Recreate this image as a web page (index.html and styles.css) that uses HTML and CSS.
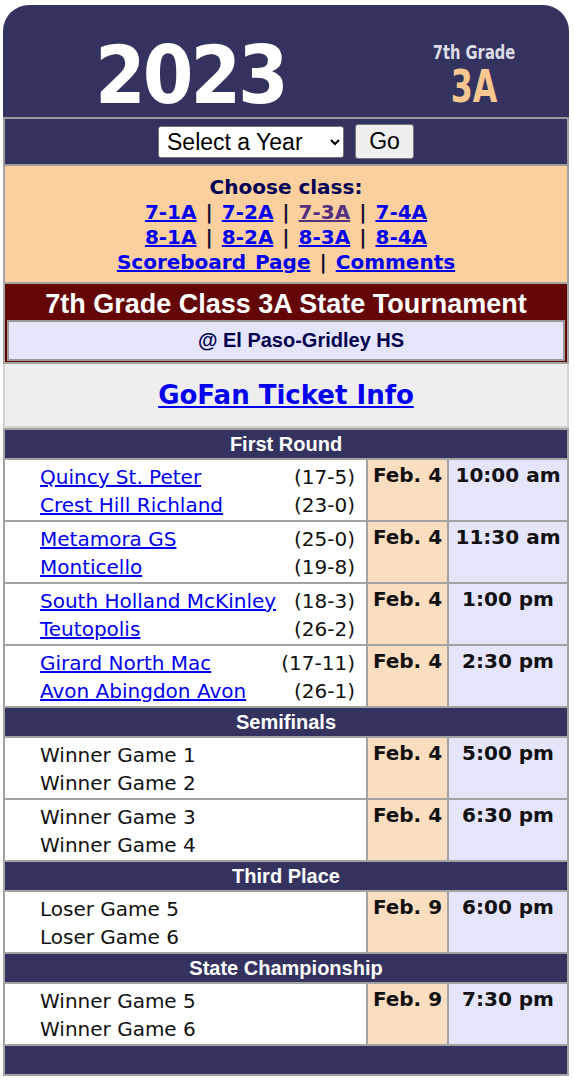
FILE: index.html
```html
<!DOCTYPE html>
<html lang="en">
<head>
<meta charset="utf-8">
<title>2023 7th Grade Class 3A State Tournament</title>
<link rel="stylesheet" href="styles.css">
</head>
<body>
<div class="page">
  <header class="banner">
    <div class="year">2023</div>
    <div class="grade">
      <div class="grade-label">7th Grade</div>
      <div class="grade-class">3A</div>
    </div>
  </header>

  <form class="yearbar">
    <select class="year-select">
      <option>Select a Year</option>
    </select>
    <button type="button" class="go">Go</button>
  </form>

  <nav class="classes">
    <div class="choose">Choose class:</div>
    <div class="links"><a href="#">7-1A</a> | <a href="#">7-2A</a> | <a href="#" class="visited">7-3A</a> | <a href="#">7-4A</a></div>
    <div class="links"><a href="#">8-1A</a> | <a href="#">8-2A</a> | <a href="#">8-3A</a> | <a href="#">8-4A</a></div>
    <div class="links"><a href="#">Scoreboard&nbsp;Page</a> | <a href="#">Comments</a></div>
  </nav>

  <section class="title">
    <h1>7th Grade Class 3A State Tournament</h1>
    <div class="site">@ El Paso-Gridley HS</div>
  </section>

  <div class="gofan"><a href="#">GoFan Ticket Info</a></div>

  <table class="bracket">
    <colgroup>
      <col class="c-teams">
      <col class="c-date">
      <col class="c-time">
    </colgroup>
    <tr class="round"><th colspan="3">First Round</th></tr>
    <tr class="game">
      <td class="teams"><div class="pair">
        <a href="#">Quincy St. Peter</a><span class="rec">(17-5)</span>
        <a href="#">Crest Hill Richland</a><span class="rec">(23-0)</span>
      </div></td>
      <td class="date">Feb. 4</td>
      <td class="time">10:00 am</td>
    </tr>
    <tr class="game">
      <td class="teams"><div class="pair">
        <a href="#">Metamora GS</a><span class="rec">(25-0)</span>
        <a href="#">Monticello</a><span class="rec">(19-8)</span>
      </div></td>
      <td class="date">Feb. 4</td>
      <td class="time">11:30 am</td>
    </tr>
    <tr class="game">
      <td class="teams"><div class="pair">
        <a href="#">South Holland McKinley</a><span class="rec">(18-3)</span>
        <a href="#">Teutopolis</a><span class="rec">(26-2)</span>
      </div></td>
      <td class="date">Feb. 4</td>
      <td class="time">1:00 pm</td>
    </tr>
    <tr class="game">
      <td class="teams"><div class="pair">
        <a href="#">Girard North Mac</a><span class="rec">(17-11)</span>
        <a href="#">Avon Abingdon Avon</a><span class="rec">(26-1)</span>
      </div></td>
      <td class="date">Feb. 4</td>
      <td class="time">2:30 pm</td>
    </tr>

    <tr class="round"><th colspan="3">Semifinals</th></tr>
    <tr class="game">
      <td class="teams"><div class="pair">
        <span>Winner Game 1</span><span></span>
        <span>Winner Game 2</span><span></span>
      </div></td>
      <td class="date">Feb. 4</td>
      <td class="time">5:00 pm</td>
    </tr>
    <tr class="game">
      <td class="teams"><div class="pair">
        <span>Winner Game 3</span><span></span>
        <span>Winner Game 4</span><span></span>
      </div></td>
      <td class="date">Feb. 4</td>
      <td class="time">6:30 pm</td>
    </tr>

    <tr class="round"><th colspan="3">Third Place</th></tr>
    <tr class="game">
      <td class="teams"><div class="pair">
        <span>Loser Game 5</span><span></span>
        <span>Loser Game 6</span><span></span>
      </div></td>
      <td class="date">Feb. 9</td>
      <td class="time">6:00 pm</td>
    </tr>

    <tr class="round"><th colspan="3">State Championship</th></tr>
    <tr class="game">
      <td class="teams"><div class="pair">
        <span>Winner Game 5</span><span></span>
        <span>Winner Game 6</span><span></span>
      </div></td>
      <td class="date">Feb. 9</td>
      <td class="time">7:30 pm</td>
    </tr>

    <tr class="round foot"><th colspan="3"></th></tr>
  </table>
</div>
</body>
</html>
```

FILE: styles.css
```css
* { box-sizing: border-box; }

html, body {
  margin: 0;
  padding: 0;
  background: #ffffff;
}

body {
  font-family: "DejaVu Sans", Verdana, sans-serif;
  color: #111111;
}

.page {
  width: 566px;
  margin: 5px 0 0 3px;
}

/* Banner */
.banner {
  height: 112px;
  background: #343360;
  border-radius: 26px 26px 0 0;
  display: flex;
  align-items: flex-start;
}

.year {
  font-family: "DejaVu Sans Condensed", "DejaVu Sans", sans-serif;
  font-stretch: condensed;
  font-weight: bold;
  font-size: 81px;
  line-height: 81px;
  letter-spacing: -3px;
  color: #ffffff;
  margin: 30px 0 0 92px;
}

.grade {
  margin: 36px 52px 0 auto;
  width: 86px;
  display: flex;
  flex-direction: column;
  align-items: center;
  font-family: "DejaVu Sans Condensed", "DejaVu Sans", sans-serif;
  font-stretch: condensed;
  font-weight: bold;
  white-space: nowrap;
}

.grade-label {
  font-size: 19px;
  line-height: 22px;
  color: #dcdce6;
  transform: scaleX(0.86);
}

.grade-class {
  margin-top: 4px;
  font-size: 44px;
  line-height: 40px;
  color: #f8c890;
  transform: scaleX(0.8);
}

/* Year bar */
.yearbar {
  margin: 0;
  height: 49px;
  background: #343360;
  border: 2px solid #9c9c9c;
  display: flex;
  align-items: center;
  justify-content: center;
  gap: 11px;
}

.year-select {
  width: 186px;
  height: 32px;
  font-family: "Liberation Sans", Arial, sans-serif;
  font-size: 23px;
  color: #000;
  background: #ffffff;
  border: 1px solid #767676;
  border-radius: 3px;
  padding: 0 4px;
}

.go {
  width: 59px;
  height: 35px;
  font-family: "Liberation Sans", Arial, sans-serif;
  font-size: 23px;
  color: #000;
  background: #efefef;
  border: 1px solid #767676;
  border-radius: 3px;
  padding: 0;
}

/* Class chooser */
.classes {
  background: #fccf9f;
  border: 2px solid #a4a4a4;
  border-top: 0;
  padding: 9px 0 7px;
  text-align: center;
  font-weight: bold;
  font-size: 20px;
  line-height: 25px;
  color: #111133;
}

.choose { color: #000055; }

.links { word-spacing: 2px; }

.classes a { color: #0000ee; }
.classes a.visited { color: #55307f; }

/* Title */
.title {
  background: #650606;
  border: 2px solid #a4a4a4;
  border-top: 0;
  padding: 4px 2px 1px;
}

.title h1 {
  margin: 0;
  text-align: center;
  font-family: "Liberation Sans", Arial, sans-serif;
  font-weight: bold;
  font-size: 27px;
  line-height: 32px;
  color: #ffffff;
}

.site {
  height: 41px;
  padding-left: 30px;
  background: #e4e4fa;
  border: 2px solid #999999;
  display: flex;
  align-items: center;
  justify-content: center;
  font-family: "Liberation Sans", Arial, sans-serif;
  font-weight: bold;
  font-size: 20px;
  color: #00004f;
}

/* GoFan */
.gofan {
  height: 64px;
  background: #eeeeee;
  border: 2px solid #d4d4d4;
  border-top: 0;
  display: flex;
  align-items: center;
  justify-content: center;
}

.gofan a {
  font-weight: bold;
  font-size: 26px;
  color: #0000ee;
}

/* Bracket table */
.bracket {
  width: 566px;
  border-collapse: separate;
  border-spacing: 2px;
  background: #a3a3a3;
  table-layout: fixed;
}

.c-teams { width: 361px; }
.c-date { width: 79px; }
.c-time { width: 118px; }

.round th {
  height: 28px;
  padding: 0;
  background: #343360;
  color: #ffffff;
  font-family: "Liberation Sans", Arial, sans-serif;
  font-weight: bold;
  font-size: 20px;
  line-height: 28px;
  text-align: center;
}

.game td {
  height: 60px;
  vertical-align: top;
  padding: 0;
}

.game td.teams {
  background: #ffffff;
  padding: 3px 11px 1px 35px;
}

.pair {
  display: grid;
  grid-template-columns: 1fr auto;
  font-size: 20px;
  line-height: 28px;
  color: #111111;
  white-space: nowrap;
}

.pair a { color: #0000ee; }
.rec { text-align: right; }

.game td.date {
  background: #fbdec0;
  text-align: center;
  font-weight: bold;
  font-size: 20px;
  line-height: 28px;
  padding-top: 1px;
  white-space: nowrap;
}

.game td.time {
  background: #e4e4fa;
  text-align: center;
  font-weight: bold;
  font-size: 20px;
  line-height: 28px;
  padding-top: 1px;
  white-space: nowrap;
}
```
